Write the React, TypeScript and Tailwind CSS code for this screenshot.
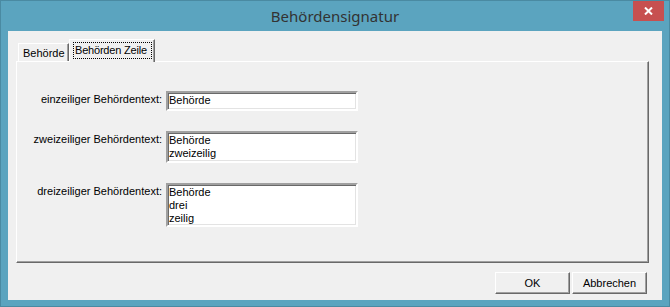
import React from "react";

const sunken =
  "border-2 border-t-[#a0a0a0] border-l-[#a0a0a0] border-r-white border-b-white shadow-[inset_1px_1px_0_#696969,inset_-1px_-1px_0_#e3e3e3] bg-white";

function Box({ lines, h }: { lines: string[]; h: string }) {
  return (
    <div className={`${sunken} ${h} w-[192px] pl-[1px] pt-[1px] leading-[13px] text-black`}>
      {lines.map((l, i) => (
        <div key={i}>{l}</div>
      ))}
    </div>
  );
}

function Label({ children }: { children: React.ReactNode }) {
  return <div className="text-right pt-[2px] leading-[13px] text-black whitespace-nowrap">{children}</div>;
}

function Btn({ children }: { children: React.ReactNode }) {
  return (
    <div className="w-[75px] h-[22px] flex items-center justify-center bg-[#f0f0f0] border border-t-white border-l-white border-r-[#696969] border-b-[#696969] shadow-[inset_-1px_-1px_0_#a0a0a0] text-black">
      {children}
    </div>
  );
}

export default function App() {
  return (
    <div
      className="w-[670px] h-[307px] bg-[#5ba4bf] border border-[#4a8aa2] flex flex-col"
      style={{ fontFamily: '"Liberation Sans", Arial, sans-serif', fontSize: "11px" }}
    >
      <div className="h-[30px] grid grid-cols-[1fr_auto_1fr] items-start">
        <div />
        <div
          className="pt-[6px] text-[15px] leading-[18px] text-[#333]"
          style={{ fontFamily: '"Noto Sans", "Open Sans", sans-serif' }}
        >
          Behördensignatur
        </div>
        <div className="flex justify-end pr-[5px]">
          <div className="w-[31px] h-[20px] bg-[#c75050] flex items-center justify-center">
            <svg width="9" height="8" viewBox="0 0 9 8">
              <path d="M1 0.5 L8 7.5 M8 0.5 L1 7.5" stroke="white" strokeWidth="2" />
            </svg>
          </div>
        </div>
      </div>
      <div className="flex-1 mx-[7px] mb-[6px] bg-[#f0f0f0] flex flex-col pt-[8px] pl-[8px] pr-[13px] pb-[5px]">
        <div className="h-[22px] flex items-end">
          <div className="ml-[2px] w-[51px] h-[18px] border border-b-0 border-t-white border-l-white border-r-[#696969] shadow-[inset_-1px_0_0_#a0a0a0] flex items-center pl-[4px] pt-[1px] text-black whitespace-nowrap">
            Behörde
          </div>
          <div className="relative z-10 -mb-[1px] w-[86px] h-[23px] bg-[#f0f0f0] border border-b-0 border-t-white border-l-white border-r-[#696969] shadow-[inset_-1px_0_0_#a0a0a0] pl-[3px] pr-[2px] pt-[2px]">
            <div className="h-[17px] border border-dotted border-black flex items-center pl-[1px] text-black whitespace-nowrap tracking-[-0.2px]">
              Behörden Zeile
            </div>
          </div>
        </div>
        <div className="h-[202px] border border-t-white border-l-white border-r-[#696969] border-b-[#696969] shadow-[inset_-1px_-1px_0_#a0a0a0] pt-[29px]">
          <div className="grid grid-cols-[145px_192px] gap-x-[4px] gap-y-[20px]">
            <Label>einzeiliger Behördentext:</Label>
            <Box lines={["Behörde"]} h="h-[20px]" />
            <Label>zweizeiliger Behördentext:</Label>
            <Box lines={["Behörde", "zweizeilig"]} h="h-[32px]" />
            <Label>dreizeiliger Behördentext:</Label>
            <Box lines={["Behörde", "drei", "zeilig"]} h="h-[44px]" />
          </div>
        </div>
        <div className="mt-[9px] flex justify-end gap-[2px] pr-[2px]">
          <Btn>OK</Btn>
          <Btn>Abbrechen</Btn>
        </div>
      </div>
    </div>
  );
}
